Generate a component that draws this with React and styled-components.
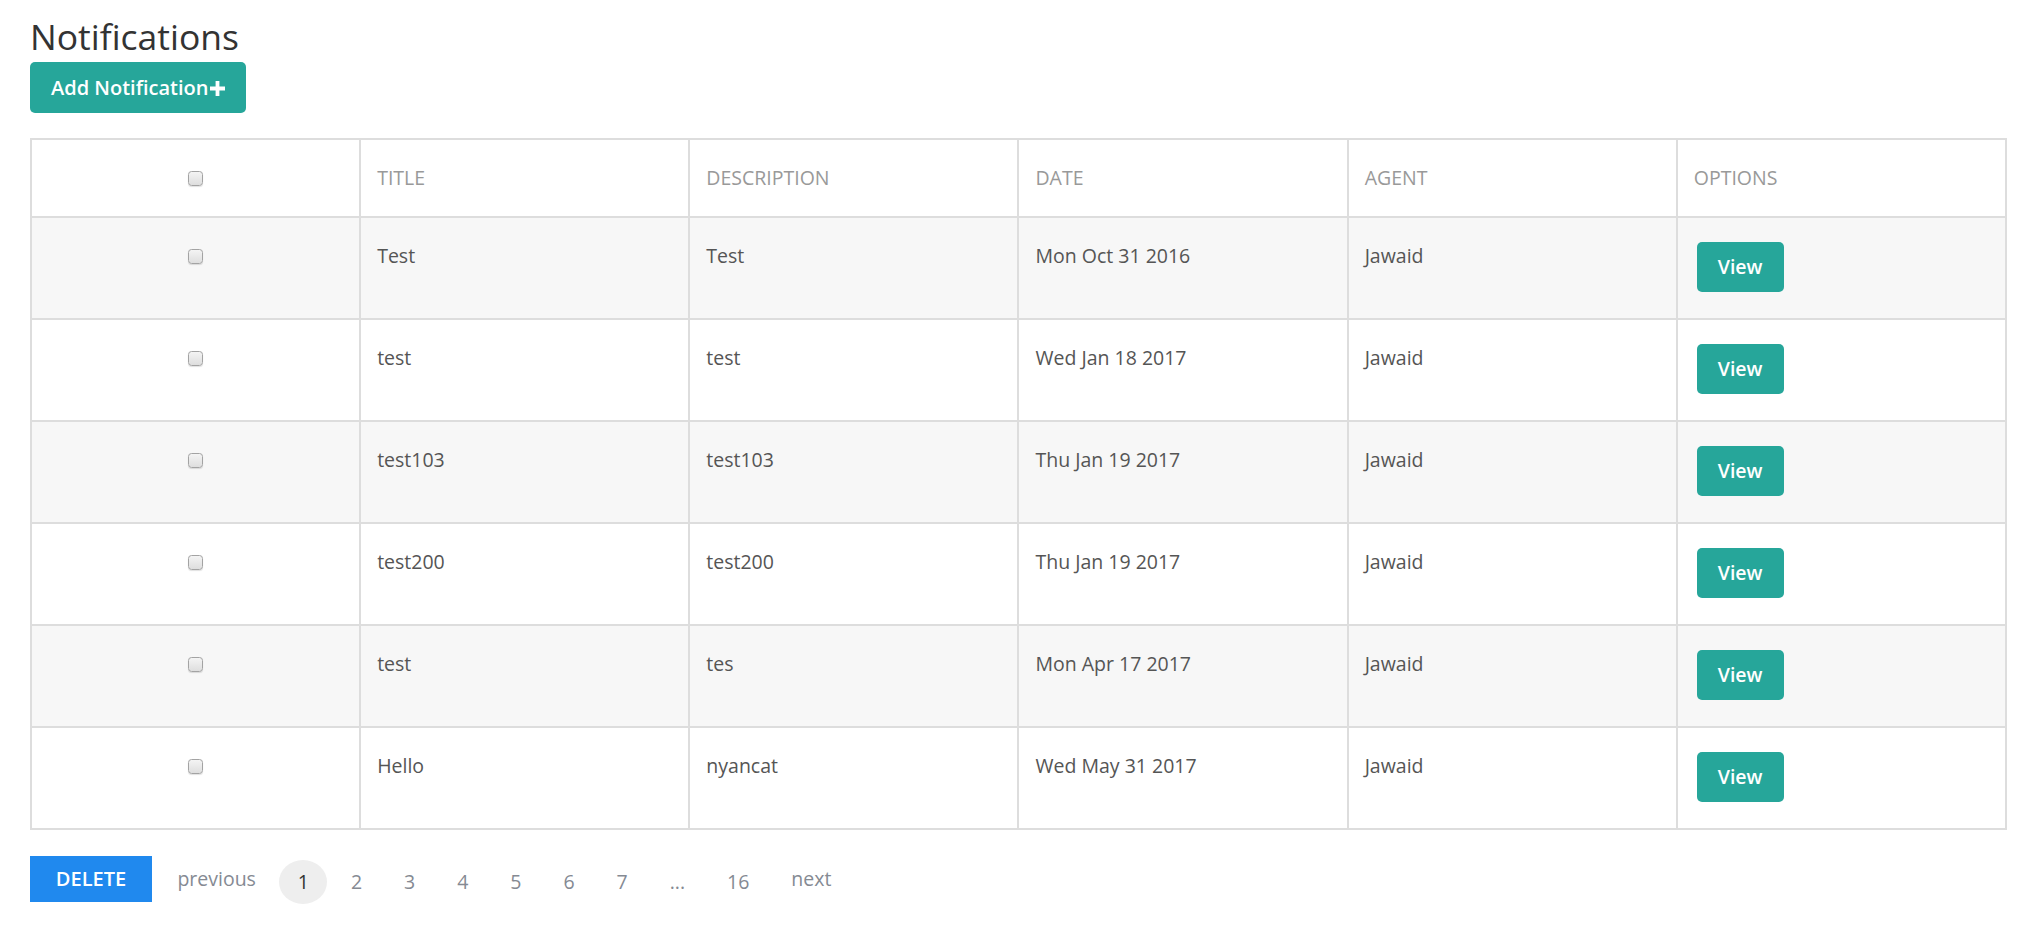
import React from 'react'
import styled, { createGlobalStyle } from 'styled-components'

const GlobalStyle = createGlobalStyle`
  html, body {
    margin: 0;
    padding: 0;
    background: #ffffff;
  }
  body {
    font-family: 'Open Sans', 'Liberation Sans', sans-serif;
    font-size: 19.5px;
    line-height: 1.4286;
    color: #555555;
  }
`

const Page = styled.div`
  padding: 16px 23px 40px 30px;
`

const Title = styled.h1`
  margin: 0 0 6px;
  font-size: 35.5px;
  line-height: 40px;
  font-weight: 400;
  color: #333333;
`

const TealButton = styled.button`
  display: inline-flex;
  align-items: center;
  height: ${p => (p.$small ? '50px' : '51px')};
  padding: 0 21px;
  margin-left: ${p => (p.$small ? '3px' : '0')};
  border: none;
  border-radius: 5px;
  background: #26a69a;
  color: #ffffff;
  font-family: 'Open Sans', 'Liberation Sans', sans-serif;
  font-size: ${p => (p.$small ? '19.5px' : '20px')};
  font-weight: 600;
  line-height: 27.86px;
  cursor: pointer;
  vertical-align: top;

  svg {
    margin-left: 2px;
    margin-top: 2px;
  }
`

const Table = styled.table`
  width: 100%;
  margin-top: 25px;
  table-layout: fixed;
  border-collapse: separate;
  border-spacing: 0;
  border-top: 2px solid #dddddd;
  border-left: 2px solid #dddddd;
`

const HeadCell = styled.th`
  padding: 24px 16px;
  border-right: 2px solid #dddddd;
  border-bottom: 2px solid #dddddd;
  text-align: ${p => (p.$center ? 'center' : 'left')};
  vertical-align: middle;
  font-weight: 400;
  color: #999999;
  text-transform: uppercase;
`

const Row = styled.tr`
  background: ${p => (p.$striped ? '#f7f7f7' : '#ffffff')};
`

const Cell = styled.td`
  padding: 24px 16px 26px;
  border-right: 2px solid #dddddd;
  border-bottom: 2px solid #dddddd;
  text-align: ${p => (p.$center ? 'center' : 'left')};
  vertical-align: top;
  color: #555555;
`

const Check = styled.input.attrs({ type: 'checkbox' })`
  appearance: none;
  -webkit-appearance: none;
  width: 15px;
  height: 15px;
  margin: 0;
  vertical-align: middle;
  border: 1px solid #a3a3a3;
  border-radius: 3.5px;
  background: linear-gradient(#f4f4f4, #dedede);
  box-shadow: 0 1px 1px rgba(0, 0, 0, 0.12);
  position: relative;
  top: -1px;
`

const Footer = styled.div`
  display: flex;
  align-items: flex-start;
  margin-top: 26px;
`

const DeleteButton = styled.button`
  width: 122px;
  height: 46px;
  margin-right: 7px;
  border: none;
  border-radius: 0;
  background: #2089ee;
  color: #ffffff;
  font-family: 'Open Sans', 'Liberation Sans', sans-serif;
  font-size: 20px;
  font-weight: 600;
  cursor: pointer;
`

const Pager = styled.ul`
  display: flex;
  gap: 5.2px;
  margin: 0;
  padding: 0;
  list-style: none;
`

const PageItem = styled.li`
  height: 44px;
  margin-top: ${p => (p.$word ? '1px' : '4px')};
  padding: 0 18.4px;
  line-height: 44px;
  border-radius: 50%;
  background: ${p => (p.$active ? '#eeeeee' : 'transparent')};
  color: ${p => (p.$active ? '#333333' : '#858a93')};
  cursor: pointer;
`

const PlusIcon = () => (
  <svg width="15" height="15" viewBox="0 0 15 15">
    <path d="M5.6 0h3.8v5.6H15v3.8H9.4V15H5.6V9.4H0V5.6h5.6z" fill="#ffffff" />
  </svg>
)

const notifications = [
  { title: 'Test', description: 'Test', date: 'Mon Oct 31 2016', agent: 'Jawaid' },
  { title: 'test', description: 'test', date: 'Wed Jan 18 2017', agent: 'Jawaid' },
  { title: 'test103', description: 'test103', date: 'Thu Jan 19 2017', agent: 'Jawaid' },
  { title: 'test200', description: 'test200', date: 'Thu Jan 19 2017', agent: 'Jawaid' },
  { title: 'test', description: 'tes', date: 'Mon Apr 17 2017', agent: 'Jawaid' },
  { title: 'Hello', description: 'nyancat', date: 'Wed May 31 2017', agent: 'Jawaid' },
]

const pages = ['1', '2', '3', '4', '5', '6', '7', '...', '16']

export default function App() {
  return (
    <Page>
      <GlobalStyle />
      <Title>Notifications</Title>
      <TealButton>
        Add Notification
        <PlusIcon />
      </TealButton>

      <Table>
        <thead>
          <tr>
            <HeadCell $center>
              <Check />
            </HeadCell>
            <HeadCell>Title</HeadCell>
            <HeadCell>Description</HeadCell>
            <HeadCell>Date</HeadCell>
            <HeadCell>Agent</HeadCell>
            <HeadCell>Options</HeadCell>
          </tr>
        </thead>
        <tbody>
          {notifications.map((n, i) => (
            <Row key={i} $striped={i % 2 === 0}>
              <Cell $center>
                <Check />
              </Cell>
              <Cell>{n.title}</Cell>
              <Cell>{n.description}</Cell>
              <Cell>{n.date}</Cell>
              <Cell>{n.agent}</Cell>
              <Cell>
                <TealButton $small>View</TealButton>
              </Cell>
            </Row>
          ))}
        </tbody>
      </Table>

      <Footer>
        <DeleteButton>DELETE</DeleteButton>
        <Pager>
          <PageItem $word>previous</PageItem>
          {pages.map(p => (
            <PageItem key={p} $active={p === '1'}>
              {p}
            </PageItem>
          ))}
          <PageItem $word>next</PageItem>
        </Pager>
      </Footer>
    </Page>
  )
}
